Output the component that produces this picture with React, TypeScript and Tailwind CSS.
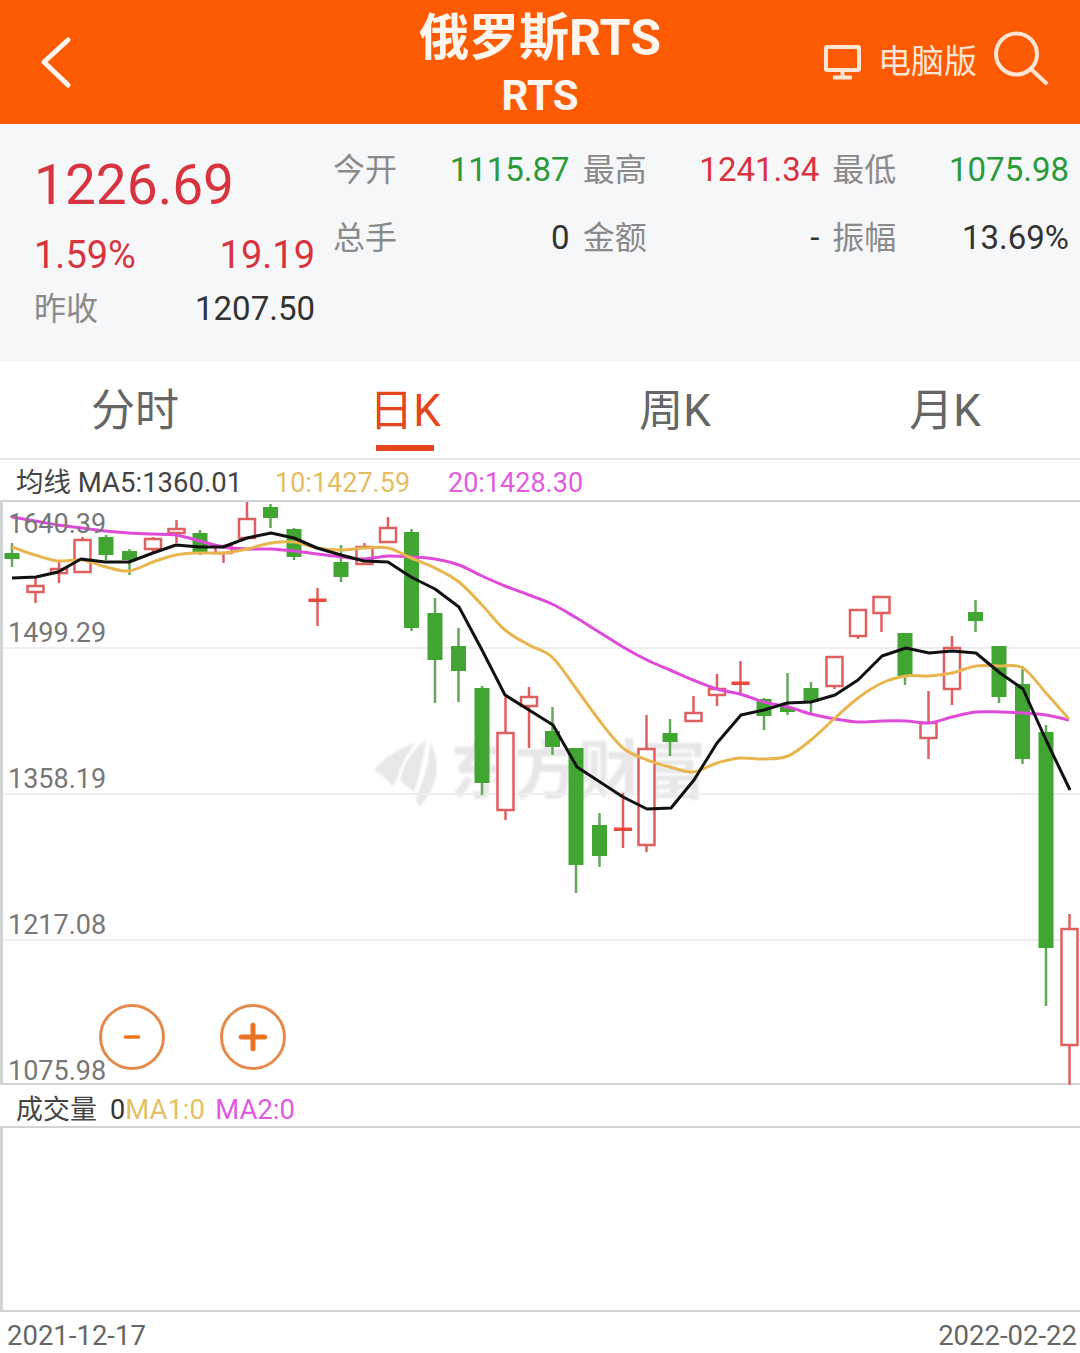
import { Minus, Plus } from "lucide-react";

type Candle = [color: "g" | "r", wickTop: number, wickBottom: number, bodyTop: number, bodyBottom: number];

// page coordinates (y from top of screenshot), one candle every 23.5px
const candles: Candle[] = [
  ["g", 543, 567, 553, 559],
  ["r", 578, 603, 586, 592],
  ["r", 560, 583, 569, 573],
  ["r", 537, 572, 540, 572],
  ["g", 535, 560, 537, 555],
  ["g", 549, 575, 551, 560],
  ["r", 537, 553, 539, 549],
  ["r", 520, 543, 529, 533],
  ["g", 530, 555, 533, 553],
  ["r", 545, 563, 546, 553],
  ["r", 501, 538, 519, 538],
  ["g", 504, 528, 507, 518],
  ["g", 528, 560, 529, 557],
  ["r", 588, 626, 600, 600],
  ["g", 545, 582, 562, 577],
  ["r", 543, 565, 547, 564],
  ["r", 517, 542, 528, 542],
  ["g", 529, 631, 532, 628],
  ["g", 598, 703, 613, 660],
  ["g", 628, 702, 646, 671],
  ["g", 686, 795, 688, 783],
  ["r", 697, 820, 733, 810],
  ["r", 687, 748, 697, 706],
  ["g", 707, 755, 731, 747],
  ["g", 748, 893, 748, 865],
  ["g", 813, 867, 825, 856],
  ["r", 793, 848, 829, 829],
  ["r", 715, 852, 749, 845],
  ["g", 719, 756, 733, 742],
  ["r", 696, 721, 713, 721],
  ["r", 674, 706, 689, 695],
  ["r", 661, 695, 683, 683],
  ["g", 698, 730, 699, 716],
  ["g", 673, 715, 707, 712],
  ["g", 682, 715, 688, 702],
  ["r", 657, 689, 657, 686],
  ["r", 609, 639, 610, 636],
  ["r", 597, 632, 597, 613],
  ["g", 633, 685, 633, 677],
  ["r", 691, 759, 723, 738],
  ["r", 636, 705, 648, 689],
  ["g", 600, 632, 612, 621],
  ["g", 646, 703, 646, 697],
  ["g", 666, 764, 684, 759],
  ["g", 725, 1006, 732, 948],
  ["r", 914, 1085, 929, 1045],
];

const ma5 =
  "12,578 36,577 58,572 81,559 105,562 129,562 153,553 176,545 200,547 223,547 247,538 271,533 294,538 317,548 341,555 364,561 388,562 411,577 435,589 459,607 482,650 505,695 529,710 553,725 577,767 600,782 623,797 647,809 671,808 694,780 717,743 741,715 764,710 787,703 811,702 835,695 858,680 882,656 906,648 929,653 952,651 976,653 1000,673 1023,689 1046,740 1070,790";
const ma10 =
  "12,547 35,555 58,561 82,560 106,567 129,571 153,562 176,555 200,553 223,553 247,549 271,543 294,542 317,548 341,550 364,548 388,548 411,558 435,568 459,582 482,605 505,630 529,645 552,657 575,687 599,720 623,748 647,760 670,767 693,772 717,763 740,758 764,759 788,756 811,740 835,718 858,698 882,683 906,676 929,676 952,673 976,666 1000,666 1023,668 1046,693 1069,719";
const ma20 =
  "12,517 35,521 58,525 82,528 105,531 129,533 153,534 176,535 200,541 223,547 247,549 271,549 294,551 317,554 341,557 364,559 388,556 411,557 435,559 459,565 482,576 505,586 529,595 552,604 575,617 599,632 623,647 647,660 670,670 693,680 717,689 740,694 764,702 788,707 811,714 835,719 858,722 882,721 906,721 929,723 952,717 976,712 1000,712 1023,713 1046,715 1069,720";

// catmull-rom through the sampled points, the slower averages are drawn smooth
const smooth = (points: string) => {
  const p = points.split(" ").map((s) => s.split(",").map(Number));
  let d = `M${p[0][0]} ${p[0][1]}`;
  for (let i = 0; i < p.length - 1; i++) {
    const a = p[Math.max(i - 1, 0)];
    const b = p[i];
    const c = p[i + 1];
    const e = p[Math.min(i + 2, p.length - 1)];
    d += ` C${b[0] + (c[0] - a[0]) / 6} ${b[1] + (c[1] - a[1]) / 6} ${c[0] - (e[0] - b[0]) / 6} ${c[1] - (e[1] - b[1]) / 6} ${c[0]} ${c[1]}`;
  }
  return d;
};

const priceLabels = [
  { text: "1640.39", cls: "top-[4px]" },
  { text: "1499.29", cls: "top-[113px]" },
  { text: "1358.19", cls: "top-[259px]" },
  { text: "1217.08", cls: "top-[405px]" },
  { text: "1075.98", cls: "top-[551px]" },
];

const StatCell = ({ label, value, color }: { label: string; value: string; color: string }) => (
  <div className="flex h-[68px] items-center justify-between">
    <span className="text-[32px] text-[#8a8a8a]">{label}</span>
    <span className={`text-[33px] ${color}`}>{value}</span>
  </div>
);

const Tab = ({ label, active }: { label: string; active?: boolean }) => (
  <div className="relative flex items-center justify-center pt-[2px]">
    <span className={active ? "text-[44px] text-[#e5461d]" : "text-[44px] text-[#666666]"}>{label}</span>
    {active && <div className="absolute bottom-[7px] left-[106px] h-[6px] w-[58px] bg-[#e5461d]" />}
  </div>
);

const KLine = () => (
  <svg className="absolute inset-0 h-full w-full" viewBox="0 502 1080 583">
    {[648, 794, 940].map((y) => (
      <line key={y} x1="3" x2="1080" y1={y} y2={y} stroke="#eeeeee" strokeWidth="2" />
    ))}
    {candles.map(([c, wt, wb, bt, bb], i) => {
      const x = 12 + i * 23.5;
      if (c === "g") {
        return (
          <g key={i}>
            <line x1={x} x2={x} y1={wt} y2={wb} stroke="#62a95a" strokeWidth="2.5" />
            <rect x={x - 7.5} y={bt} width="15" height={bb - bt} fill="#41a532" />
          </g>
        );
      }
      return (
        <g key={i}>
          <line x1={x} x2={x} y1={wt} y2={wb} stroke="#df5f5f" strokeWidth="2.5" />
          {bt === bb ? (
            <rect x={x - 9} y={bt - 1.5} width="18" height="3.5" fill="#ea4a3c" />
          ) : (
            <rect x={x - 8} y={bt} width="16" height={bb - bt} fill="#ffffff" stroke="#df5f5f" strokeWidth="2.5" />
          )}
        </g>
      );
    })}
    <path d={smooth(ma20)} fill="none" stroke="#e04ad8" strokeWidth="3" />
    <path d={smooth(ma10)} fill="none" stroke="#e8b54f" strokeWidth="3" />
    <polyline points={ma5} fill="none" stroke="#111111" strokeWidth="3" strokeLinejoin="round" />
  </svg>
);

const Watermark = () => (
  <div className="absolute left-[374px] top-[236px] flex items-center gap-[10px] text-[#e7e7e8] blur-[1px]">
    <svg width="66" height="68" viewBox="0 0 66 68" fill="currentColor">
      <path d="M0 32 C8 22 22 12 42 4 C34 14 28 24 24 38 C20 48 18 50 16 46 C12 40 6 36 0 32 Z" />
      <path d="M26 42 C30 24 40 10 52 2 C50 18 46 34 40 54 C36 50 30 46 26 42 Z" />
      <path d="M42 60 C50 42 56 22 56 4 C66 22 66 46 46 68 C44 66 42 64 42 60 Z" />
    </svg>
    <span className="text-[64px] font-bold leading-none">东方财富</span>
  </div>
);

export default function App() {
  return (
    <div
      className="flex h-[1353px] w-[1080px] flex-col overflow-hidden bg-white"
      style={{ fontFamily: 'Roboto, "Noto Sans CJK SC", sans-serif' }}
    >
      {/* header */}
      <header className="relative flex h-[124px] shrink-0 flex-col items-center bg-[#fd5b03] text-[#fff6f0]">
        <div className="mt-[7px] text-[50px] font-bold leading-[62px]">俄罗斯RTS</div>
        <div className="mt-[2px] text-[42px] font-bold leading-[50px]">RTS</div>
        <svg className="absolute left-[38px] top-[34px]" width="36" height="56" viewBox="0 0 36 56" fill="none">
          <path d="M30 6 L6 28 L30 51" stroke="#fff6f0" strokeWidth="5" strokeLinecap="round" strokeLinejoin="round" />
        </svg>
        <div className="absolute right-[30px] top-[30px] flex items-center text-[#fde6d6]">
          <svg className="mt-[4px]" width="40" height="38" viewBox="0 0 40 38" fill="none" stroke="#fde6d6" strokeWidth="4">
            <rect x="3" y="5" width="33" height="23" rx="1" />
            <path d="M19.5 28 V35 M10 35.5 H29" />
          </svg>
          <span className="ml-[15px] mt-[5px] text-[33px] leading-none">电脑版</span>
          <svg className="ml-[17px]" width="56" height="58" viewBox="0 0 56 58" fill="none" stroke="#fde6d6" strokeWidth="4">
            <circle cx="22.5" cy="24" r="20.5" />
            <path d="M38 40 L52 53" strokeLinecap="round" />
          </svg>
        </div>
      </header>

      {/* quote summary */}
      <section className="flex h-[238px] shrink-0 bg-[#f6f7f8]">
        <div className="ml-[34px] w-[281px] shrink-0">
          <div className="mt-[26px] text-[55px] leading-[70px] text-[#d8343f]">1226.69</div>
          <div className="mt-[10px] flex items-center justify-between text-[38px] leading-[50px] text-[#d8343f]">
            <span>1.59%</span>
            <span>19.19</span>
          </div>
          <div className="mt-[5px] flex items-center justify-between leading-[48px]">
            <span className="text-[32px] text-[#8a8a8a]">昨收</span>
            <span className="text-[33px] text-[#333333]">1207.50</span>
          </div>
        </div>
        <div className="ml-[18px] mt-[12px] grid flex-1 grid-cols-3 content-start gap-x-[13px] pr-[11px]">
          <StatCell label="今开" value="1115.87" color="text-[#2b9a3a]" />
          <StatCell label="最高" value="1241.34" color="text-[#d8343f]" />
          <StatCell label="最低" value="1075.98" color="text-[#2b9a3a]" />
          <StatCell label="总手" value="0" color="text-[#333333]" />
          <StatCell label="金额" value="-" color="text-[#333333]" />
          <StatCell label="振幅" value="13.69%" color="text-[#333333]" />
        </div>
      </section>

      {/* period tabs */}
      <nav className="grid h-[98px] shrink-0 grid-cols-4 border-b-2 border-[#e6e6e6]">
        <Tab label="分时" />
        <Tab label="日K" active />
        <Tab label="周K" />
        <Tab label="月K" />
      </nav>

      {/* moving averages legend */}
      <div className="flex h-[40px] shrink-0 items-center pl-[16px] pt-[6px] text-[27px]">
        <span className="w-[259px] text-[27.5px] text-[#444444]">均线 MA5:1360.01</span>
        <span className="w-[173px] text-[#e5bd62]">10:1427.59</span>
        <span className="text-[#e25ae0]">20:1428.30</span>
      </div>

      {/* k-line chart */}
      <div className="relative h-[585px] shrink-0 border-y-2 border-l-[3px] border-[#d2d4d4]">
        <div className="absolute -left-[3px] top-0 h-[583px] w-[1080px]">
          <Watermark />
          <KLine />
          {priceLabels.map((p) => (
            <span key={p.text} className={`absolute left-[8px] text-[27px] leading-[36px] text-[#777777] ${p.cls}`}>
              {p.text}
            </span>
          ))}
          <button className="absolute left-[99px] top-[502px] flex h-[66px] w-[66px] items-center justify-center rounded-full border-[3px] border-[#e58a4d] text-[#ea7420]">
            <Minus size={22} strokeWidth={4} />
          </button>
          <button className="absolute left-[220px] top-[502px] flex h-[66px] w-[66px] items-center justify-center rounded-full border-[3px] border-[#e58a4d] text-[#ea7420]">
            <Plus size={40} strokeWidth={3} />
          </button>
        </div>
      </div>

      {/* volume legend */}
      <div className="flex h-[41px] shrink-0 items-center pl-[16px] pt-[9px] text-[27px]">
        <span className="w-[94px] text-[#444444]">成交量</span>
        <span className="text-[#333333]">0</span>
        <span className="w-[90px] text-[27.5px] text-[#e3c264]">MA1:0</span>
        <span className="text-[27.5px] text-[#e25ae0]">MA2:0</span>
      </div>

      {/* volume chart, empty */}
      <div className="h-[186px] shrink-0 border-y-2 border-l-[3px] border-[#d2d4d4]" />

      {/* date axis */}
      <div className="flex flex-1 items-start justify-between pl-[7px] pr-[3px] pt-[6px] text-[27.5px] leading-[36px] text-[#666666]">
        <span>2021-12-17</span>
        <span>2022-02-22</span>
      </div>
    </div>
  );
}
